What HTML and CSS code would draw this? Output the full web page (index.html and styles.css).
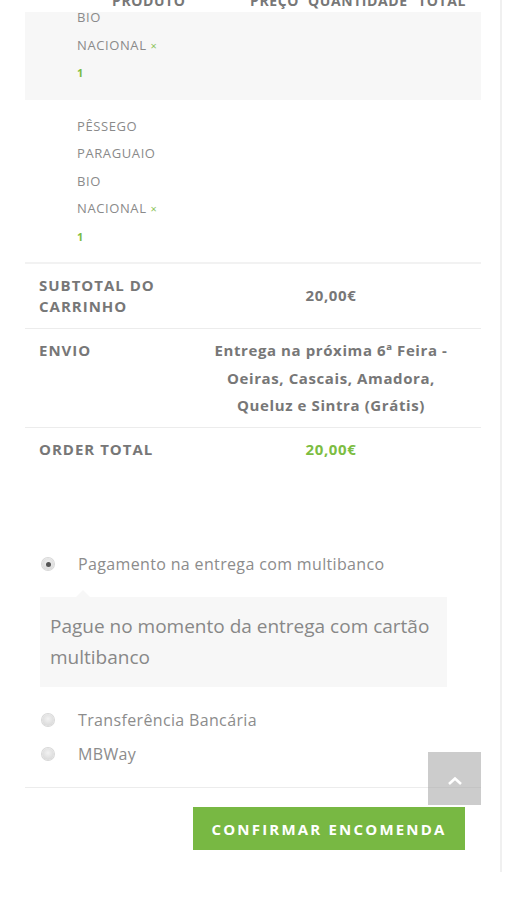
FILE: index.html
```html
<!DOCTYPE html>
<html lang="pt">
<head>
  <meta charset="UTF-8">
  <meta name="viewport" content="width=device-width, initial-scale=1.0">
  <title>Finalizar encomenda</title>
  <link rel="stylesheet" href="styles.css">
</head>
<body>
  <div class="page">
    <div class="cart">
      <div class="cart-head">
        <span>PRODUTO</span>
        <span>PREÇO</span>
        <span>QUANTIDADE</span>
        <span>TOTAL</span>
      </div>

      <div class="item item-alt">
        <div class="item-name first">
          <div>BIO</div>
          <div>NACIONAL <span class="times">×</span></div>
          <div class="qty">1</div>
        </div>
      </div>

      <div class="item">
        <div class="item-name">
          <div>PÊSSEGO</div>
          <div>PARAGUAIO</div>
          <div>BIO</div>
          <div>NACIONAL <span class="times">×</span></div>
          <div class="qty">1</div>
        </div>
      </div>

      <div class="total-row subtotal">
        <div class="label">SUBTOTAL DO CARRINHO</div>
        <div class="value">20,00€</div>
      </div>
      <div class="total-row shipping">
        <div class="label">ENVIO</div>
        <div class="value">Entrega na próxima 6ª Feira - Oeiras, Cascais, Amadora, Queluz e Sintra (Grátis)</div>
      </div>
      <div class="total-row order-total">
        <div class="label">ORDER TOTAL</div>
        <div class="value green">20,00€</div>
      </div>

      <div class="payment">
        <label class="option">
          <span class="radio checked"></span>
          <span>Pagamento na entrega com multibanco</span>
        </label>
        <div class="payment-box">Pague no momento da entrega com cartão multibanco</div>
        <label class="option">
          <span class="radio"></span>
          <span>Transferência Bancária</span>
        </label>
        <label class="option option-last">
          <span class="radio"></span>
          <span>MBWay</span>
        </label>
      </div>

      <div class="place-order">
        <button type="button">CONFIRMAR ENCOMENDA</button>
      </div>
    </div>
  </div>

  <a class="to-top" href="#">
    <svg width="16" height="10" viewBox="0 0 16 10"><path d="M2 8 L8 2.5 L14 8" fill="none" stroke="#fff" stroke-width="2.6"/></svg>
  </a>
</body>
</html>
```

FILE: styles.css
```css
body { margin: 0; font-family: "Open Sans", "Liberation Sans", sans-serif; color: #888; background: #fff; overflow: hidden; }
.page { width: 500px; min-height: 882px; margin-top: 8px; border-right: 2px solid #f0f0f0; }
.cart { margin: -18px 19px 0 25px; }

.cart-head { display: grid; grid-template-columns: 87px 138px 58px 110px 1fr; height: 22px; line-height: 22px; font-size: 14px; font-weight: 700; letter-spacing: 0.6px; color: #777; background: #fff; position: relative; z-index: 1; }
.cart-head span:first-child { grid-column: 2; }

.item { padding: 13px 0 12px 52px; border-bottom: 2px solid #f2f2f2; }
.item-alt { background: #f7f7f7; padding-top: 0; padding-bottom: 13px; border-bottom: 0; }
.item-name { font-size: 13px; line-height: 27.5px; letter-spacing: 0.6px; color: #8a8a8a; }
.item-name.first { margin-top: -8px; }
.times { color: #8cc45a; font-size: 11px; }
.qty { color: #7cbd42; font-weight: 700; font-size: 11px; }

.total-row { display: grid; grid-template-columns: 142px 1fr; padding: 8px 0 7px 14px; border-bottom: 1px solid #ececec; font-weight: 700; font-size: 15px; color: #777; }
.total-row .label { letter-spacing: 1px; line-height: 27.5px; }
.total-row .value { text-align: center; line-height: 27.5px; letter-spacing: 0.6px; padding: 0 25px 0 25px; }
.subtotal { align-items: center; padding: 11px 0 11px 14px; }
.subtotal .label { line-height: 21px; width: 130px; }
.order-total { border-bottom: 0; }
.green { color: #7cbd42; }

.payment { margin-top: 83px; padding-left: 16px; border-bottom: 1px solid #ececec; padding-bottom: 22px; }
.option { display: flex; align-items: center; gap: 24px; height: 22px; font-size: 16px; letter-spacing: 0.35px; color: #8c8c8c; }
.option + .option { margin-top: 12px; }
.radio { width: 12px; height: 12px; border-radius: 50%; background: radial-gradient(circle at 50% 40%, #f2f2f2, #d2d2d2); box-shadow: 0 0 0 1px #d8d8d8; position: relative; margin-left: 1px; }
.radio.checked::after { content: ""; position: absolute; left: 3.5px; top: 3.5px; width: 5px; height: 5px; border-radius: 50%; background: #555; }
.payment-box { position: relative; width: 397px; margin: 22px 0 22px -1px; padding: 14px 0 14px 10px; background: #f7f7f7; font-size: 19px; line-height: 31px; color: #888; }
.payment-box::before { content: ""; position: absolute; left: 36px; top: -7px; border: 7px solid transparent; border-top: 0; border-bottom-color: #f7f7f7; }

.place-order { display: flex; justify-content: flex-end; padding: 19px 16px 0 0; }
.place-order button { width: 272px; height: 43px; border: 0; background: #78b843; color: #fff; font-family: inherit; font-size: 15px; font-weight: 700; letter-spacing: 2.2px; cursor: pointer; }

.to-top { position: fixed; left: 428px; top: 752px; width: 53px; height: 53px; background: rgba(170, 170, 170, 0.6); display: flex; align-items: center; justify-content: center; padding-top: 4px; box-sizing: border-box; }
```
